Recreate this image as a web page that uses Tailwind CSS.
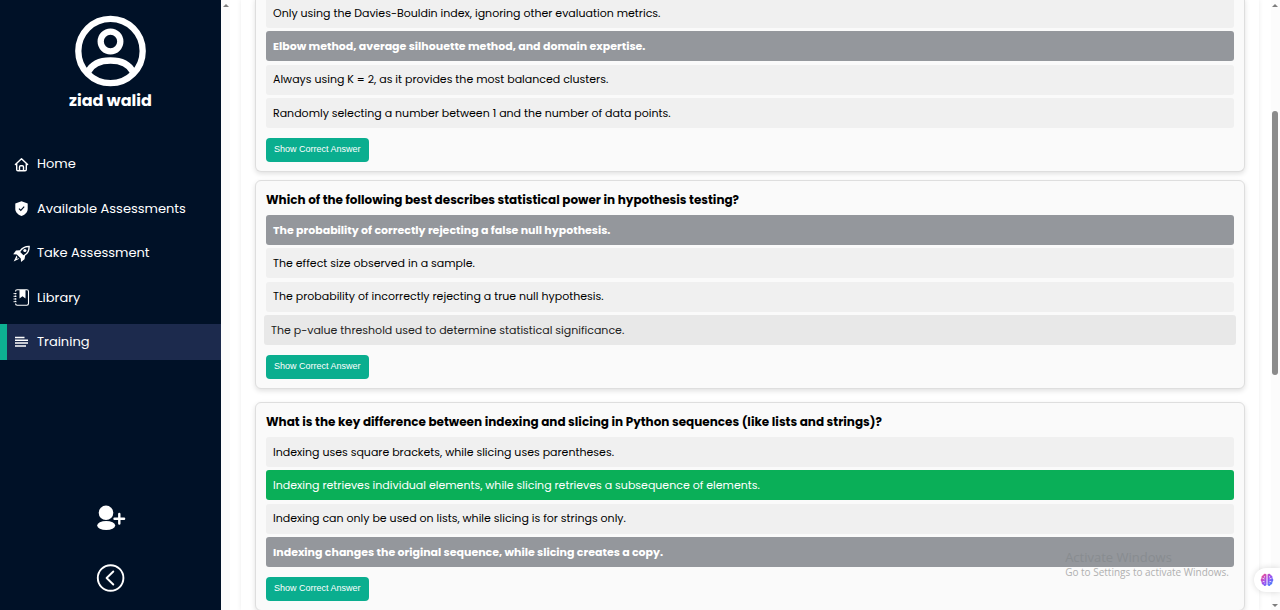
<!DOCTYPE html>
<html lang="en">
<head>
<meta charset="utf-8">
<meta name="viewport" content="width=device-width, initial-scale=1">
<title>Training</title>
<script src="https://cdn.jsdelivr.net/npm/@tailwindcss/browser@4"></script>
</head>
<body class="relative flex h-screen overflow-hidden bg-white font-[Poppins,Inter,sans-serif] text-black">

<aside class="flex w-[221px] shrink-0 flex-col bg-[#001127] text-white">
  <div class="flex flex-col items-center pt-[15px]">
    <svg class="size-[72px]" viewBox="0 0 72 72" fill="none" stroke="currentColor" stroke-width="6.3" aria-hidden="true">
      <circle cx="35.500" cy="36" r="32.2"/>
      <circle cx="35.500" cy="26.500" r="9.8"/>
      <path d="M13 57C17.500 48 25.500 45.500 35.500 45.500S53.500 48 58 57"/>
    </svg>
    <p class="text-base leading-7 font-bold">ziad walid</p>
  </div>

  <nav class="mt-[31px] flex min-h-[214px] flex-col justify-between text-[13px]" aria-label="Main">
    <a href="#" class="flex h-9 items-center gap-[7px] border-l-[7px] border-transparent pl-[6px]">
      <svg class="size-[17px]" viewBox="0 0 17 17" fill="none" stroke="currentColor" stroke-width="1.4" stroke-linejoin="round" stroke-linecap="round" aria-hidden="true"><path d="M2.400 8.500 8.500 2.700l6.100 5.800M3.700 7.500V13.500q0 1.200 1.200 1.200H6.500V11q0-1.200 1.200-1.200h1.600q1.200 0 1.200 1.200v3.700h1.600q1.200 0 1.200-1.200V7.500M6.500 14.700h4"/></svg>
      Home</a>
    <a href="#" class="flex h-9 items-center gap-[7px] border-l-[7px] border-transparent pl-[6px]">
      <svg class="size-[17px]" viewBox="0 0 17 17" aria-hidden="true"><path fill="currentColor" d="M8.500 1.200 14.700 3.600V9c0 3.400-3 5.800-6.200 7C5.300 14.800 2.300 12.400 2.300 9V3.600Z"/><path d="m6 8.600 1.800 1.800 3.400-3.700" fill="none" stroke="#001127" stroke-width="1.200"/></svg>
      Available Assessments</a>
    <a href="#" class="flex h-9 items-center gap-[7px] border-l-[7px] border-transparent pl-[6px]">
      <svg class="size-[17px]" viewBox="0 0 17 17" aria-hidden="true"><path d="M16.800.800C12 .600 9.200 2.100 6.800 5.300L3 5.600.2 9.200l3.600.2 4 4L8 17l3.500-2.800.7-3.600C15.600 8.300 17 5.400 16.800.800Z" fill="currentColor"/><path d="M15.400 2.200c-3.500.1-6.200 1.700-8.200 4.900l3.200 3.200c3.300-1.900 5-4.400 5-8.100Z" fill="#001127"/><circle cx="11.900" cy="5.500" r="1.600" fill="currentColor"/><path d="m3.600 10.500-2.900 5.900 5.600-2.700-1-.5-1.800.9.900-1.900Z" fill="currentColor"/></svg>
      Take Assessment</a>
    <a href="#" class="flex h-9 items-center gap-[7px] border-l-[7px] border-transparent pl-[6px]">
      <svg class="size-[17px]" viewBox="0 0 17 17" fill="none" stroke="currentColor" aria-hidden="true"><path d="M2.500 2.500q0-1.700 1.700-1.700h9.600q1.700 0 1.700 1.700v12q0 1.700-1.700 1.700H4.200q-1.700 0-1.700-1.700" stroke-width="1.100"/><path d="M2.500 4v10" stroke-width="1.200" stroke-dasharray="1.300 1.300"/><path d="M.5 4.600h3M.5 7.300h3M.5 10h3M.5 12.700h3" stroke-width=".9"/><path d="M6.500 1H12.500V9.500L9.500 7.300 6.500 9.500Z" fill="currentColor" stroke="none"/></svg>
      Library</a>
    <a href="#" aria-current="page" class="flex h-9 items-center gap-[7px] border-l-[7px] border-[#0db092] bg-[#1c2a4d] pl-[6px]">
      <svg class="size-[17px]" viewBox="0 0 17 17" stroke="currentColor" stroke-width="1.500" aria-hidden="true"><path d="M2 3.500h9.500M2 6.300h13M2 9.100h13M2 11.900h11"/></svg>
      Training</a>
  </nav>

  <div class="mt-auto flex flex-col items-center gap-8 pb-[17px]">
    <button type="button" aria-label="Add user">
      <svg class="block h-[26px] w-[30px]" viewBox="0 0 30 26" fill="currentColor" aria-hidden="true"><circle cx="10" cy="7.800" r="7.300"/><ellipse cx="10.200" cy="20.500" rx="9" ry="4.500"/><path d="M23.300 9v9.600M18.500 13.800h9.600" stroke="currentColor" stroke-width="2.400" stroke-linecap="round"/></svg>
    </button>
    <button type="button" aria-label="Collapse sidebar">
      <svg class="block size-[30px]" viewBox="0 0 30 30" fill="none" stroke="currentColor" stroke-width="1.900" stroke-linecap="round" stroke-linejoin="round" aria-hidden="true"><circle cx="14.600" cy="15" r="12.800"/><path d="m17.300 8.500-6.700 6.500 6.700 6.500"/></svg>
    </button>
  </div>
</aside>

<div class="w-[9px] shrink-0 bg-[#fbfbfb] pt-1">
  <svg class="ml-[2px] h-[3px] w-[6px]" viewBox="0 0 6 3" fill="#7d7d7d" aria-hidden="true"><path d="M3 0 6 3H0Z"/></svg>
</div>

<main class="mr-[12px] ml-[11px] min-w-0 flex-1 bg-white px-[14px] shadow-[0_0_5px_rgba(0,0,0,0.08)]">
  <section class="-mt-[2px] rounded-b-md border border-t-0 border-[#dedede] bg-[#fafafa] px-[10px] pb-[9px] shadow-[0_2px_5px_rgba(0,0,0,0.12)]">
    <div class="flex min-h-[130px] flex-col justify-between text-[11px]">
      <button type="button" class="h-[30px] rounded-[3px] bg-[#f0f0f0] px-[7px] text-left">Only using the Davies-Bouldin index, ignoring other evaluation metrics.</button>
      <button type="button" class="h-[30px] rounded-[3px] bg-[#94979c] px-[7px] text-left font-bold text-white">Elbow method, average silhouette method, and domain expertise.</button>
      <button type="button" class="h-[30px] rounded-[3px] bg-[#f0f0f0] px-[7px] text-left">Always using K = 2, as it provides the most balanced clusters.</button>
      <button type="button" class="h-[30px] rounded-[3px] bg-[#f0f0f0] px-[7px] text-left">Randomly selecting a number between 1 and the number of data points.</button>
    </div>
    <button type="button" class="mt-[10px] block h-6 rounded-[4px] bg-[#0aae8f] px-2 font-['Liberation_Sans',Arial,sans-serif] text-[9px] text-white">Show Correct Answer</button>
  </section>

  <section class="mt-2 rounded-md border border-[#dedede] bg-[#fafafa] px-[10px] py-[9px] shadow-[0_2px_5px_rgba(0,0,0,0.12)]">
    <h2 class="h-[25px] text-xs leading-5 font-bold">Which of the following best describes statistical power in hypothesis testing?</h2>
    <div class="flex min-h-[130px] flex-col justify-between text-[11px]">
      <button type="button" class="h-[30px] rounded-[3px] bg-[#94979c] px-[7px] text-left font-bold text-white">The probability of correctly rejecting a false null hypothesis.</button>
      <button type="button" class="h-[30px] rounded-[3px] bg-[#f0f0f0] px-[7px] text-left">The effect size observed in a sample.</button>
      <button type="button" class="h-[30px] rounded-[3px] bg-[#f0f0f0] px-[7px] text-left">The probability of incorrectly rejecting a true null hypothesis.</button>
      <button type="button" class="-mx-[2px] h-[30px] rounded-[3px] bg-[#e8e8e8] px-[7px] text-left text-[#222]">The p-value threshold used to determine statistical significance.</button>
    </div>
    <button type="button" class="mt-[10px] block h-6 rounded-[4px] bg-[#0aae8f] px-2 font-['Liberation_Sans',Arial,sans-serif] text-[9px] text-white">Show Correct Answer</button>
  </section>

  <section class="mt-[13px] rounded-md border border-[#dedede] bg-[#fafafa] px-[10px] py-[9px] shadow-[0_2px_5px_rgba(0,0,0,0.12)]">
    <h2 class="h-[25px] text-xs leading-5 font-bold">What is the key difference between indexing and slicing in Python sequences (like lists and strings)?</h2>
    <div class="flex min-h-[130px] flex-col justify-between text-[11px]">
      <button type="button" class="h-[30px] rounded-[3px] bg-[#f0f0f0] px-[7px] text-left">Indexing uses square brackets, while slicing uses parentheses.</button>
      <button type="button" class="h-[30px] rounded-[3px] bg-[#0aaf58] px-[7px] text-left text-white">Indexing retrieves individual elements, while slicing retrieves a subsequence of elements.</button>
      <button type="button" class="h-[30px] rounded-[3px] bg-[#f0f0f0] px-[7px] text-left">Indexing can only be used on lists, while slicing is for strings only.</button>
      <button type="button" class="h-[30px] rounded-[3px] bg-[#94979c] px-[7px] text-left font-bold text-white">Indexing changes the original sequence, while slicing creates a copy.</button>
    </div>
    <button type="button" class="mt-[10px] block h-6 rounded-[4px] bg-[#0aae8f] px-2 font-['Liberation_Sans',Arial,sans-serif] text-[9px] text-white">Show Correct Answer</button>
  </section>
</main>

<div class="flex w-[9px] shrink-0 flex-col items-center bg-[#fcfcfc] pt-1 pr-px pb-[3px]">
  <svg class="h-[3px] w-[6px]" viewBox="0 0 6 3" fill="#7d7d7d" aria-hidden="true"><path d="M3 0 6 3H0Z"/></svg>
  <div class="mt-[104px] h-[264px] w-[6px] rounded-full bg-[#8b8b8b]"></div>
  <svg class="mt-auto h-[3px] w-[6px]" viewBox="0 0 6 3" fill="#7d7d7d" aria-hidden="true"><path d="M3 3 6 0H0Z"/></svg>
</div>

<div class="pointer-events-none absolute right-[51px] bottom-[31px] font-['Open_Sans',sans-serif]">
  <p class="text-[13px] leading-4 text-[#888c90]">Activate Windows</p>
  <p class="text-[10px] leading-[14px] text-[#b0b0b0]">Go to Settings to activate Windows.</p>
</div>

<button type="button" aria-label="Assistant" class="absolute right-0 bottom-[18px] flex h-6 w-[26px] items-center rounded-l-full bg-white pl-[6px] shadow-[0_0_6px_rgba(0,0,0,0.15)]">
  <svg class="size-[14px]" viewBox="0 0 14 14" aria-hidden="true">
    <defs><linearGradient id="brain" x1="0" y1="0" x2="1" y2="1"><stop offset="0" stop-color="#ff4b7d"/><stop offset=".5" stop-color="#9b4ff0"/><stop offset="1" stop-color="#2f8cff"/></linearGradient></defs>
    <path fill="url(#brain)" d="M6.500 1.500C5.500.3 3.500.8 3.200 2.300 1.600 2.600 1.200 4.200 1.700 5 .4 5.900.3 8 1.700 9c-.4 1.600.6 2.600 1.700 2.700.5 1.500 2.500 1.600 3.100.4ZM7.500 1.500c1-1.200 3-.7 3.300.8 1.600.3 2 1.900 1.500 2.700 1.300.9 1.400 3 0 4 .4 1.600-.6 2.600-1.700 2.700-.5 1.500-2.500 1.600-3.100.4Z"/>
    <path d="M2.500 5.300 4.500 6M4.400 3.200v1.300M2.700 8.800 4.600 8.300M4.700 10.500V9.800M11.500 5.300 9.500 6M9.600 3.200v1.300M11.300 8.800 9.400 8.300M9.300 10.500V9.800" stroke="#fff" stroke-width=".8" fill="none"/>
  </svg>
</button>
</body>
</html>
